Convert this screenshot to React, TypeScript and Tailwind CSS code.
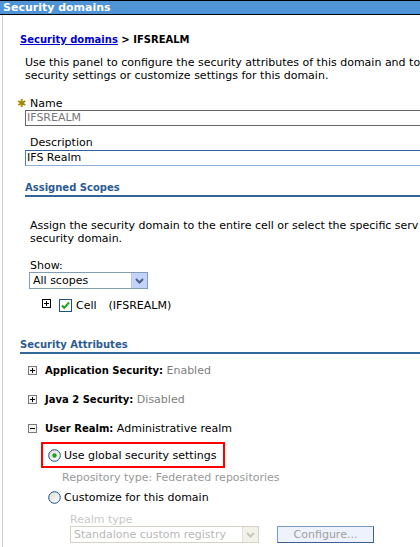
import React from 'react';

const font = { fontFamily: '"DejaVu Sans", Verdana, sans-serif' };

function ExpandBox({ open = false }: { open?: boolean }) {
  return (
    <svg width="9" height="9" viewBox="0 0 9 9" className="shrink-0">
      <rect x="0.5" y="0.5" width="8" height="8" fill="#f4f4f4" stroke="#7a7a7a" />
      <path d="M2 4.5h5" stroke="#000" />
      {!open && <path d="M4.5 2v5" stroke="#000" />}
    </svg>
  );
}

function TreePlus() {
  return (
    <svg width="9" height="9" viewBox="0 0 9 9" className="shrink-0">
      <rect x="0.5" y="0.5" width="8" height="8" fill="#fff" stroke="#000" />
      <path d="M2 4.5h5M4.5 2v5" stroke="#000" />
    </svg>
  );
}

function CheckBox() {
  return (
    <svg width="13" height="13" viewBox="0 0 13 13" className="shrink-0">
      <rect x="0.5" y="0.5" width="12" height="12" fill="#fff" stroke="#1c5180" />
      <path d="M3 6.5l2.2 2.3L10 3.5" stroke="#21a121" strokeWidth="2" fill="none" />
    </svg>
  );
}

function Radio({ checked = false }: { checked?: boolean }) {
  return (
    <svg width="13" height="13" viewBox="0 0 13 13" className="shrink-0">
      <defs>
        <linearGradient id="rg" x1="0" y1="0" x2="1" y2="1">
          <stop offset="0" stopColor="#dcdcd6" />
          <stop offset="1" stopColor="#ffffff" />
        </linearGradient>
      </defs>
      <circle cx="6.5" cy="6.5" r="5.8" fill="url(#rg)" stroke="#1c5180" />
      {checked && <circle cx="6.5" cy="6.5" r="2.2" fill="#21a121" />}
    </svg>
  );
}

function ArrowButton({ disabled = false }: { disabled?: boolean }) {
  return (
    <div
      className={
        'w-[16px] h-full shrink-0 flex items-center justify-center border-l ' +
        (disabled ? 'bg-[#f2f1ea] border-[#e4e2d8]' : 'bg-[#c3d3fd] border-[#b6c6ee]')
      }
    >
      <svg width="9" height="6" viewBox="0 0 9 6">
        <path d="M1 1l3.5 3.5L8 1" stroke={disabled ? '#c9c7ba' : '#4d6185'} strokeWidth="2" fill="none" />
      </svg>
    </div>
  );
}

function Attr({ label, value, open = false, dark = false }: { label: string; value: string; open?: boolean; dark?: boolean }) {
  return (
    <div className="flex items-center h-[13px] pl-[25px] gap-[8px] whitespace-nowrap">
      <ExpandBox open={open} />
      <span>
        <span className="font-bold text-[10px]">{label}:</span>{' '}
        <span className={dark ? 'text-black' : 'text-[#808080]'}>{value}</span>
      </span>
    </div>
  );
}

export default function App() {
  return (
    <div className="w-[420px] h-[547px] overflow-hidden bg-white text-black text-[11px] leading-[13px]" style={font}>
      <div className="h-[15px] bg-[#4f94d6] border-y border-black text-white font-bold text-[11px] leading-[13px] pl-[3px] whitespace-nowrap">
        Security domains
      </div>
      <div className="ml-[2px] border-l border-[#cfcfcf] h-[532px] whitespace-nowrap overflow-hidden">
        <div className="pt-[18px] pl-[17px] font-bold text-[10px]">
          <span className="text-[#0000cc] underline">Security domains</span> &gt; IFSREALM
        </div>

        <div className="mt-[10px] pl-[22px]">
          Use this panel to configure the security attributes of this domain and to
          <br />
          security settings or customize settings for this domain.
        </div>

        <div className="mt-[15px] h-[13px] pl-[14px] flex items-center">
          <span className="text-[#a08a00] w-[13px] text-[11px]">✱</span>
          <span>Name</span>
        </div>
        <div className="ml-[22px] h-[16px] border border-[#666] border-r-0 text-[#777] pl-[1px] leading-[14px]">
          IFSREALM
        </div>

        <div className="mt-[10px] pl-[27px]">Description</div>
        <div className="ml-[22px] mt-[1px] h-[16px] border-t border-[#2f5f9f] border-b border-b-[#8fb0d6] border-l border-l-[#4f7fb8] pl-[1px] leading-[14px]">
          IFS Realm
        </div>

        <div className="mt-[16px] ml-[22px] border-b-2 border-[#336699] text-[#2b5b92] font-bold text-[10px] leading-[12px] pb-[1px]">
          Assigned Scopes
        </div>

        <div className="mt-[22px] pl-[27px]">
          Assign the security domain to the entire cell or select the specific serv
          <br />
          security domain.
        </div>

        <div className="mt-[14px] pl-[27px]">Show:</div>
        <div className="ml-[26px] w-[119px] h-[17px] border border-[#7f9db9] flex">
          <div className="flex-1 pl-[3px] leading-[15px]">All scopes</div>
          <ArrowButton />
        </div>

        <div className="mt-[10px] pl-[39px] flex items-center">
          <div className="-mt-[4px]">
            <TreePlus />
          </div>
          <div className="ml-[8px]">
            <CheckBox />
          </div>
          <span className="ml-[4px]">Cell</span>
          <span className="ml-[12px]">(IFSREALM)</span>
        </div>

        <div className="mt-[27px] ml-[17px] border-b-2 border-[#336699] text-[#2b5b92] font-bold text-[10px] leading-[12px] pb-[1px]">
          Security Attributes
        </div>

        <div className="mt-[10px] flex flex-col gap-[16px]">
          <Attr label="Application Security" value="Enabled" />
          <Attr label="Java 2 Security" value="Disabled" />
          <Attr label="User Realm" value="Administrative realm" open dark />
        </div>

        <div className="mt-[7px] ml-[38px] w-[184px] h-[26px] border-2 border-[#ff0000] flex items-center pl-[5px] gap-[3px]">
          <Radio checked />
          <span>Use global security settings</span>
        </div>
        <div className="mt-[3px] pl-[59px] text-[#999]">Repository type: Federated repositories</div>

        <div className="mt-[7px] pl-[45px] flex items-center gap-[3px]">
          <Radio />
          <span>Customize for this domain</span>
        </div>

        <div className="mt-[9px] pl-[67px] text-[#c8c8c8]">Realm type</div>
        <div className="pl-[67px] flex items-center gap-[18px]">
          <div className="w-[189px] h-[17px] border border-[#d6d3c6] flex text-[#b8b8b8]">
            <div className="flex-1 pl-[3px] leading-[15px] overflow-hidden">Standalone custom registry</div>
            <ArrowButton disabled />
          </div>
          <div className="w-[97px] h-[17px] border border-[#7a9cc4] border-b-[#3c5f94] border-r-[#3c5f94] bg-[#eef2fd] text-[#a0a0a0] text-center leading-[15px]">
            Configure...
          </div>
        </div>
      </div>
    </div>
  );
}
